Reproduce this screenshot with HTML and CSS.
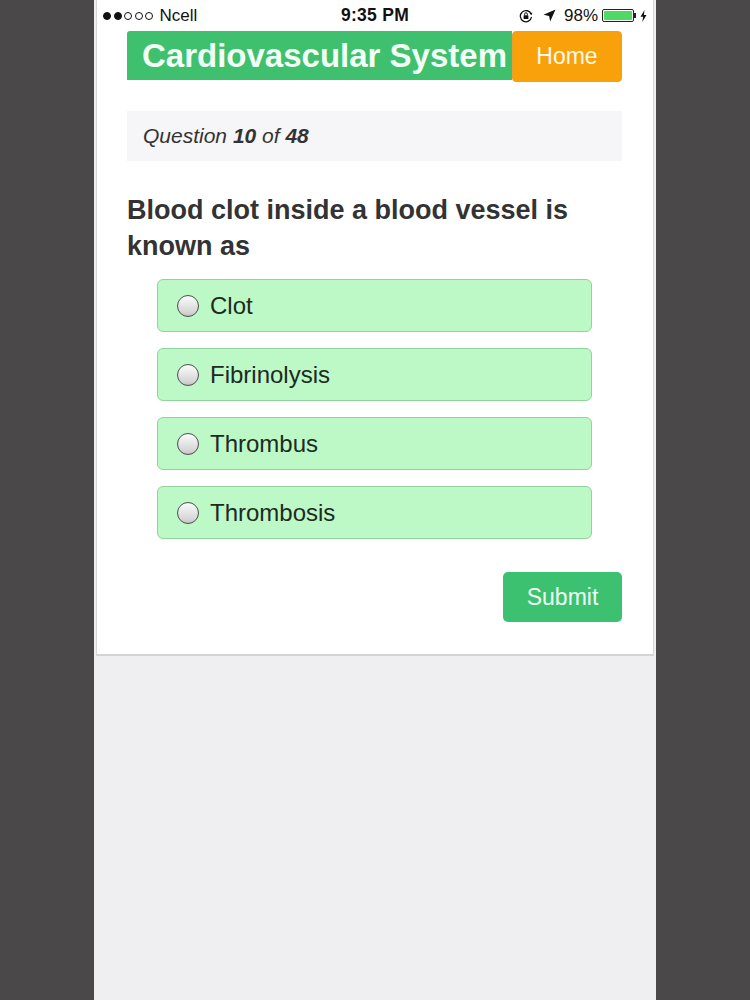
FILE: index.html
```html
<!DOCTYPE html>
<html>
<head>
<meta charset="utf-8">
<link rel="stylesheet" href="styles.css">
</head>
<body>
<div class="phone">
  <div class="card">
    <div class="status">
      <div class="st-left">
        <span class="dots"><span class="dot full"></span><span class="dot full"></span><span class="dot"></span><span class="dot"></span><span class="dot"></span></span>
        <span class="carrier">Ncell</span>
      </div>
      <div class="st-time">9:35 PM</div>
      <div class="st-right">
        <svg class="ico-lock" width="14" height="14" viewBox="0 0 14 14">
          <path d="M12.2 5.2A5.6 5.6 0 1 0 12.5 8" fill="none" stroke="#111" stroke-width="1.3"/>
          <path d="M10.6 4.4l2.2 1.6 0.6-2.6z" fill="#111"/>
          <rect x="4.6" y="6.3" width="4.8" height="3.6" rx="0.5" fill="#111"/>
          <path d="M5.6 6.4V5.2a1.4 1.4 0 0 1 2.8 0v1.2" fill="none" stroke="#111" stroke-width="1"/>
        </svg>
        <svg class="ico-loc" width="13" height="13" viewBox="0 0 13 13">
          <path d="M12.5 0.5L0.5 5.8l5.6 1.1 1.1 5.6z" fill="#111"/>
        </svg>
        <span class="pct">98%</span>
        <span class="battery"><span class="batt-fill"></span></span><span class="batt-tip"></span>
        <svg class="ico-bolt" width="7" height="12" viewBox="0 0 7 12">
          <path d="M4.5 0L0.5 6.8h2.6L2.3 12l4.2-7H3.9z" fill="#111"/>
        </svg>
      </div>
    </div>

    <div class="content">
      <div class="header">
        <div class="title">Cardiovascular System</div>
        <a class="home">Home</a>
      </div>

      <div class="qcount"><i>Question <b>10</b> of <b>48</b></i></div>

      <h2 class="question">Blood clot inside a blood vessel is known as</h2>

      <div class="options">
        <label class="option"><span class="radio"></span><span class="opt-text">Clot</span></label>
        <label class="option"><span class="radio"></span><span class="opt-text">Fibrinolysis</span></label>
        <label class="option"><span class="radio"></span><span class="opt-text">Thrombus</span></label>
        <label class="option"><span class="radio"></span><span class="opt-text">Thrombosis</span></label>
      </div>

      <div class="actions">
        <a class="submit">Submit</a>
      </div>
    </div>
  </div>
</div>
</body>
</html>
```

FILE: styles.css
```css
html, body {
  margin: 0;
  padding: 0;
  height: 100%;
}
body {
  background: #4a4849;
  font-family: "Liberation Sans", Arial, sans-serif;
}
.phone {
  width: 562px;
  height: 1000px;
  margin: 0 auto;
  background: #efeef0;
  padding: 0 2px;
  box-sizing: border-box;
}
.card {
  background: #ffffff;
  border-left: 1px solid #d6d6d6;
  border-right: 1px solid #d6d6d6;
  border-bottom: 2px solid #d4d4d6;
}
.status {
  height: 31px;
  display: flex;
  align-items: center;
  justify-content: space-between;
  padding: 0 6px 0 6px;
  position: relative;
  color: #111;
  font-size: 17px;
}
.st-left {
  display: flex;
  align-items: center;
}
.dots {
  display: flex;
  align-items: center;
  margin-right: 4px;
}
.dot {
  width: 8px;
  height: 8px;
  box-sizing: border-box;
  border: 1px solid #111;
  border-radius: 50%;
  margin-right: 2.5px;
}
.dot.full {
  background: #111;
}
.carrier {
  font-size: 17px;
}
.st-time {
  position: absolute;
  left: 0;
  right: 0;
  text-align: center;
  font-size: 17.5px;
  font-weight: bold;
  letter-spacing: 0.3px;
  pointer-events: none;
}
.st-right {
  display: flex;
  align-items: center;
}
.ico-lock { margin-right: 10px; }
.ico-loc { margin-right: 8px; }
.pct { font-size: 17px; margin-right: 4px; }
.battery {
  width: 32px;
  height: 13px;
  border: 1px solid #222;
  border-radius: 2px;
  padding: 1px;
  box-sizing: border-box;
  display: inline-flex;
}
.batt-fill {
  flex: 1;
  background: #4cd964;
  border-radius: 1px;
}
.batt-tip {
  width: 2px;
  height: 5px;
  background: #222;
  margin-right: 4px;
}
.content {
  padding: 0 31px 32px 30px;
}
.header {
  display: flex;
  align-items: flex-start;
}
.title {
  flex: 1;
  height: 49px;
  background: #3fc06f;
  color: #f2fff5;
  font-size: 33px;
  font-weight: bold;
  line-height: 49px;
  padding-left: 15px;
  white-space: nowrap;
  border-top-left-radius: 3px;
}
.home {
  width: 108px;
  height: 49px;
  background: #f9a10b;
  border: 1px solid #eca02a;
  border-radius: 4px;
  color: #fff8e8;
  font-size: 23px;
  line-height: 49px;
  text-align: center;
}
.qcount {
  margin-top: 29px;
  height: 50px;
  background: #f6f5f8;
  padding-left: 16px;
  display: flex;
  align-items: center;
  font-size: 21px;
  color: #333;
}
.question {
  margin: 31px 0 15px 0;
  font-size: 27px;
  line-height: 36px;
  font-weight: bold;
  color: #333;
}
.options {
  display: flex;
  flex-direction: column;
  gap: 16px;
  padding: 0 30px;
}
.option {
  height: 53px;
  box-sizing: border-box;
  background: #bdf8c7;
  border: 1px solid #8fd49a;
  border-radius: 6px;
  display: flex;
  align-items: center;
  padding-left: 19px;
}
.radio {
  width: 22px;
  height: 22px;
  box-sizing: border-box;
  border-radius: 50%;
  border: 1px solid #4d4d4d;
  background: linear-gradient(#fbfbfb, #d6d6d6 80%, #c4c4c4);
  margin-right: 11px;
}
.opt-text {
  font-size: 24px;
  color: #1d2b1f;
}
.actions {
  display: flex;
  justify-content: flex-end;
  margin-top: 33px;
}
.submit {
  width: 119px;
  height: 50px;
  background: #3cc171;
  border-radius: 5px;
  color: #effff3;
  font-size: 23px;
  line-height: 50px;
  text-align: center;
}
```
